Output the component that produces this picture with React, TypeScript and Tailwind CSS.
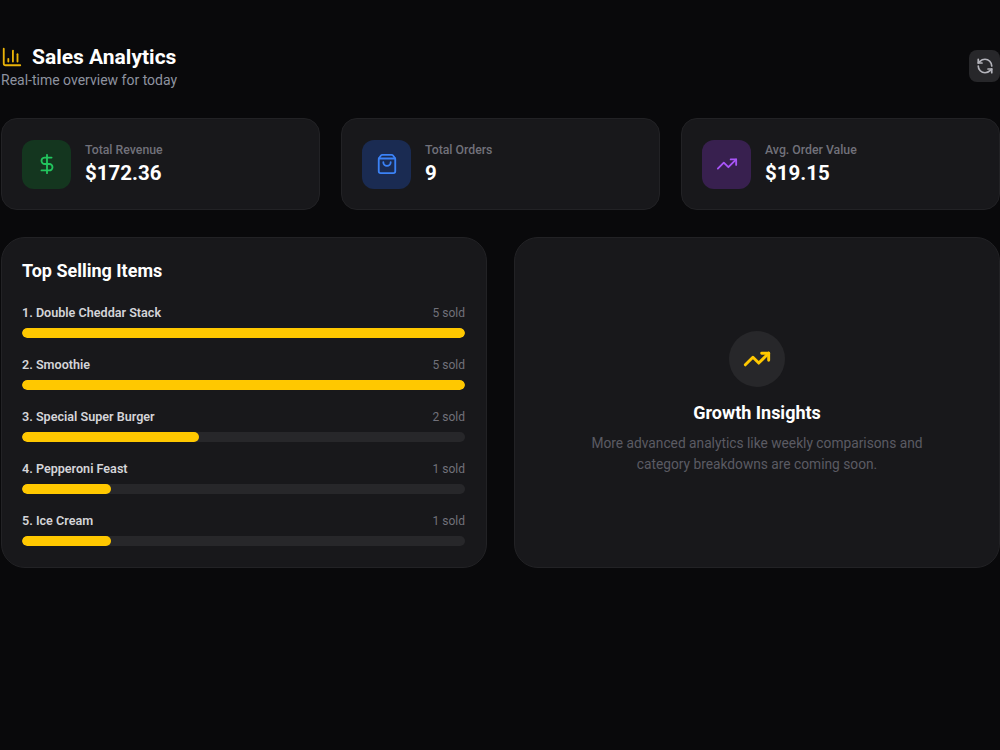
import { BarChart3, DollarSign, RefreshCcw, ShoppingBag, TrendingUp } from "lucide-react";

const stats = [
  { label: "Total Revenue", value: "$172.36", icon: DollarSign, box: "bg-[#14361f]", color: "text-[#22c55e]" },
  { label: "Total Orders", value: "9", icon: ShoppingBag, box: "bg-[#1a2b52]", color: "text-[#3b82f6]" },
  { label: "Avg. Order Value", value: "$19.15", icon: TrendingUp, box: "bg-[#38204f]", color: "text-[#a855f7]" },
];

const items = [
  { name: "1. Double Cheddar Stack", sold: 5 },
  { name: "2. Smoothie", sold: 5 },
  { name: "3. Special Super Burger", sold: 2 },
  { name: "4. Pepperoni Feast", sold: 1 },
  { name: "5. Ice Cream", sold: 1 },
];

export default function App() {
  return (
    <div className="min-h-[750px] bg-[#09090b] pl-px pt-[43px] font-['Roboto','Open_Sans',sans-serif] text-white">
      <header className="mb-[29px] flex items-center justify-between">
        <div>
          <h1 className="flex h-[28px] items-center gap-[9px] text-[21px] leading-[28px] font-bold">
            <BarChart3 className="h-[22px] w-[22px] text-[#eab308]" strokeWidth={2} />
            Sales Analytics
          </h1>
          <p className="text-[14px] leading-[18px] text-[#8e93a0]">Real-time overview for today</p>
        </div>
        <button className="flex h-[32px] w-[31px] items-center justify-center rounded-lg bg-[#27272a] text-[#b4b4bb]">
          <RefreshCcw className="h-[18px] w-[18px]" strokeWidth={2.25} />
        </button>
      </header>

      <section className="mb-[27px] grid grid-cols-3 gap-[21px]">
        {stats.map((s) => (
          <div
            key={s.label}
            className="flex h-[92px] items-center gap-[14px] rounded-2xl border border-[#222225] bg-[#18181b] pl-[20px]"
          >
            <div className={`flex h-[49px] w-[49px] items-center justify-center rounded-xl ${s.box}`}>
              <s.icon className={`h-[22px] w-[22px] ${s.color}`} strokeWidth={2} />
            </div>
            <div className="pt-px">
              <p className="text-[12.3px] leading-[16px] font-medium text-[#71717a]">{s.label}</p>
              <p className="mt-px text-[20.5px] leading-[28px] font-bold">{s.value}</p>
            </div>
          </div>
        ))}
      </section>

      <section className="grid grid-cols-2 gap-[27px]">
        <div className="h-[331px] rounded-3xl border border-[#222225] bg-[#18181b] pl-[20px] pr-[21px] pt-[19px]">
          <h2 className="mb-[20px] text-[18px] leading-[28px] font-bold">Top Selling Items</h2>
          <div className="flex flex-col gap-[19px]">
            {items.map((item) => (
              <div key={item.name}>
                <div className="mb-[7px] flex items-center justify-between text-[12px] leading-[16px]">
                  <span className="text-[12.6px] font-semibold text-[#d4d4d8]">{item.name}</span>
                  <span className="text-[#71717a]">{item.sold} sold</span>
                </div>
                <div className="h-[10px] overflow-hidden rounded-full bg-[#27272a]">
                  <div
                    className="h-full rounded-full bg-[#ffc800]"
                    style={{ width: `${(item.sold / 5) * 100}%` }}
                  />
                </div>
              </div>
            ))}
          </div>
        </div>

        <div className="flex h-[331px] flex-col items-center justify-center rounded-3xl border border-[#222225] bg-[#18181b] px-[64px] text-center">
          <div className="mb-[12px] flex h-[56px] w-[56px] items-center justify-center rounded-full bg-[#27272a]">
            <TrendingUp className="h-[28px] w-[28px] text-[#ffc800]" strokeWidth={2.5} />
          </div>
          <h2 className="mb-[6px] text-[18px] leading-[28px] font-bold">Growth Insights</h2>
          <p className="text-[13.75px] leading-[21px] text-[#5b5b63]">
            More advanced analytics like weekly comparisons and category breakdowns are coming soon.
          </p>
        </div>
      </section>
    </div>
  );
}
